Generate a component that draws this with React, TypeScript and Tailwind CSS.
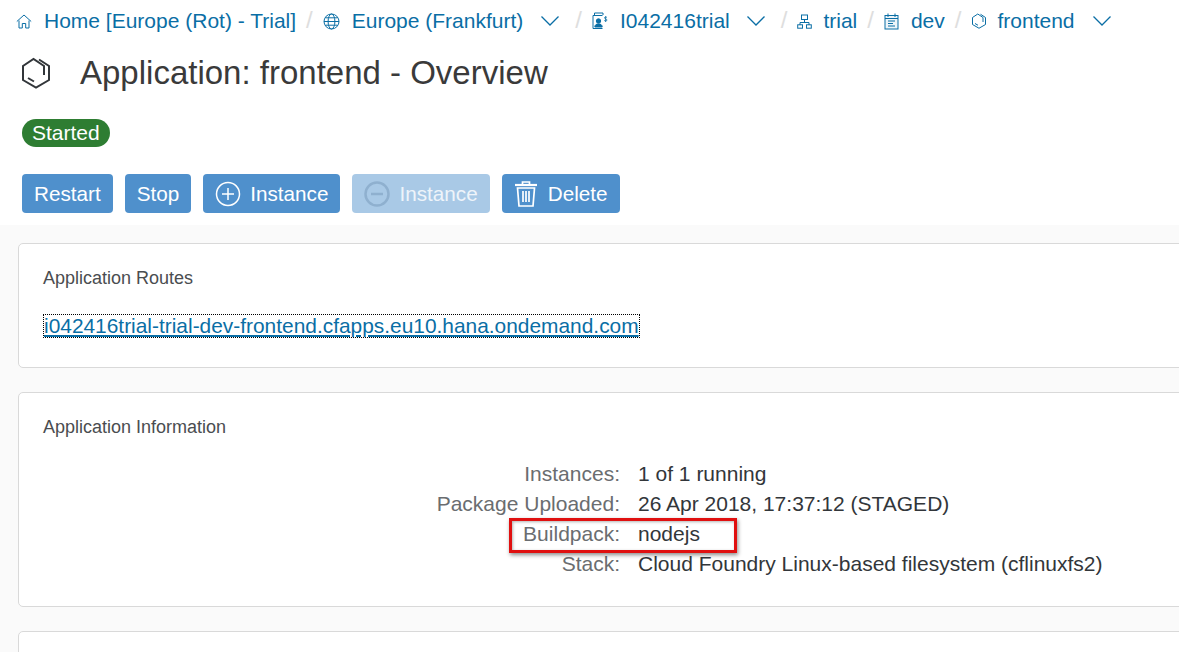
import type { ReactNode } from "react";

const font = { fontFamily: '"Liberation Sans", Arial, sans-serif' };

function Chevron() {
  return (
    <svg width="20" height="12" viewBox="0 0 20 12" fill="none" stroke="#0a6ea5" strokeWidth="1.3" className="shrink-0">
      <path d="M1.5 1.5 L10 10 L18.5 1.5" />
    </svg>
  );
}

function Slash() {
  return <span className="text-[24px] leading-none text-[#dedede]">/</span>;
}

function HexIcon({ size, color, width = 1.3 }: { size: number; color: string; width?: number }) {
  return (
    <svg width={size} height={size} viewBox="0 0 32 32" fill="none" stroke={color} strokeWidth={width} className="shrink-0">
      <path d="M19 2.5 L29 9 V23 L16 30.5 L3 23 V9 L13.5 2 L24 9 V18" />
      <path d="M8 21 L14 24.5" />
    </svg>
  );
}

function HomeIcon() {
  return (
    <svg width="16" height="15" viewBox="0 0 16 15" fill="none" stroke="#0a6ea5" strokeWidth="1">
      <path d="M0.8 7.5 L8 1 L15.2 7.5" />
      <path d="M3 6.5 V14 H6.3 V9.5 H9.7 V14 H13 V6.5" />
    </svg>
  );
}

function GlobeIcon() {
  return (
    <svg width="17" height="17" viewBox="0 0 17 17" fill="none" stroke="#0a6ea5" strokeWidth="1">
      <circle cx="8.5" cy="8.5" r="7.5" />
      <ellipse cx="8.5" cy="8.5" rx="3.4" ry="7.5" />
      <path d="M1 8.5 H16 M2.2 4.8 H14.8 M2.2 12.2 H14.8" />
    </svg>
  );
}

function AccountIcon() {
  return (
    <svg width="16" height="18" viewBox="0 0 16 18" fill="none" stroke="#0a6ea5" strokeWidth="1">
      <path d="M11 3 V1 H2.5 V3 M1 3.5 H10.5 M1 3.5 V16.5 H10.5" />
      <circle cx="6.5" cy="9" r="2.2" fill="#0a6ea5" />
      <path d="M2.8 15 C3 12.5 4.5 12 6.5 12 C8.5 12 10 12.5 10.2 15 Z" fill="#0a6ea5" />
      <path d="M15 5.5 C14 4.5 12.3 5 12.5 6 C12.7 7.2 15 6.8 15 8 C15 9.2 13 9.3 12.2 8.4 M13.6 4.2 V10" strokeWidth="0.8" />
    </svg>
  );
}

function OrgIcon() {
  return (
    <svg width="15" height="15" viewBox="0 0 15 15" fill="none" stroke="#0a6ea5" strokeWidth="1">
      <rect x="4.5" y="1" width="6" height="4.5" />
      <path d="M7.5 5.5 V8.5 M3 11 V8.5 H12 V11" />
      <rect x="0.7" y="10.8" width="4.8" height="3.4" />
      <rect x="9.5" y="10.8" width="4.8" height="3.4" />
    </svg>
  );
}

function SpaceIcon() {
  return (
    <svg width="15" height="17" viewBox="0 0 15 17" fill="none" stroke="#0a6ea5" strokeWidth="1">
      <rect x="1" y="2.5" width="13" height="13.5" fill="#eef5f9" />
      <path d="M4 0.5 V4 M11 0.5 V4 M1 5.5 H14" />
      <path d="M4 8 H11 M4 10.5 H9 M4 13 H11" />
    </svg>
  );
}

function Crumb({ icon, label, gap, chevron, chevronGap }: { icon: ReactNode; label: string; gap: string; chevron?: boolean; chevronGap?: string }) {
  return (
    <div className="flex items-center">
      <span className={`flex items-center ${gap}`}>{icon}</span>
      <span>{label}</span>
      {chevron && <span className={`flex items-center mr-[5px] ${chevronGap}`}><Chevron /></span>}
    </div>
  );
}

function ActionButton({ children, disabled }: { children: ReactNode; disabled?: boolean }) {
  return (
    <button className={`flex h-[39px] items-center rounded-[4px] px-3 text-[20.7px] ${disabled ? "bg-[#a9c9e6] text-[#eef4fa]" : "bg-[#4f90cc] text-white"}`}>
      {children}
    </button>
  );
}

function Row({ label, value }: { label: string; value: string }) {
  return (
    <div className="flex h-[30px] items-center text-[21px]">
      <div className="w-[577px] shrink-0 text-right text-[#6a6d70]">{label}</div>
      <div className="ml-[18px] text-[#32363a]">{value}</div>
    </div>
  );
}

export default function App() {
  return (
    <div style={font} className="relative h-[652px] w-[1179px] overflow-hidden bg-[#fafafa]">
      {/* HEADER */}
      <div className="h-[225px] bg-white">
        <div className="flex h-[42px] items-center pl-4 text-[21px] text-[#0a6ea5]">
          <Crumb icon={<HomeIcon />} label="Home [Europe (Rot) - Trial]" gap="mr-[12px]" />
          <span className="mx-[10px]"><Slash /></span>
          <Crumb icon={<GlobeIcon />} label="Europe (Frankfurt)" gap="mr-[12px]" chevron chevronGap="ml-[17px]" />
          <span className="mx-[10px]"><Slash /></span>
          <Crumb icon={<AccountIcon />} label="I042416trial" gap="mr-[12px]" chevron chevronGap="ml-[16px]" />
          <span className="mx-[10px]"><Slash /></span>
          <Crumb icon={<OrgIcon />} label="trial" gap="mr-[11px]" />
          <span className="mx-[10px]"><Slash /></span>
          <Crumb icon={<SpaceIcon />} label="dev" gap="mr-[12px]" />
          <span className="mx-[10px]"><Slash /></span>
          <Crumb icon={<HexIcon size={16} color="#0a6ea5" width={2} />} label="frontend" gap="mr-[10px]" chevron chevronGap="ml-[17px]" />
        </div>

        <div className="flex h-[62px] items-center pl-[20px]">
          <HexIcon size={32} color="#32363a" width={2} />
          <h1 className="ml-[28px] text-[33px] text-[#3a3a3a]">Application: frontend - Overview</h1>
        </div>

        <div className="mt-[15px] pl-[22px]">
          <span className="inline-flex h-[28px] items-center rounded-full bg-[#2e7d32] px-[10px] text-[21px] text-white">Started</span>
        </div>

        <div className="mt-[27px] flex gap-3 pl-[22px]">
          <ActionButton>Restart</ActionButton>
          <ActionButton>Stop</ActionButton>
          <ActionButton>
            <svg width="26" height="26" viewBox="0 0 26 26" fill="none" stroke="white" strokeWidth="1.5" className="mr-[9px]">
              <circle cx="13" cy="13" r="11.5" />
              <path d="M13 7 V19 M7 13 H19" />
            </svg>
            Instance
          </ActionButton>
          <ActionButton disabled>
            <svg width="26" height="26" viewBox="0 0 26 26" fill="none" stroke="#8fb0cf" strokeWidth="2.5" className="mr-[9px]">
              <circle cx="13" cy="13" r="11.5" />
              <path d="M7 13 H19" />
            </svg>
            Instance
          </ActionButton>
          <ActionButton>
            <svg width="24" height="28" viewBox="0 0 24 28" fill="none" stroke="white" strokeWidth="1.7" className="mr-[10px]">
              <path d="M1 5 H23" strokeWidth="2.2" />
              <path d="M8.5 4.5 V2 H15.5 V4.5" />
              <path d="M3.5 8 L5 26 H19 L20.5 8 Z" />
              <path d="M9 11 V22 M12 11 V22 M15 11 V22" />
            </svg>
            Delete
          </ActionButton>
        </div>
      </div>

      {/* CARDS */}
      <div className="ml-[18px] mt-[18px] flex w-[1200px] flex-col gap-[24px]">
        <section className="h-[125px] rounded-[5px] border border-[#d9d9d9] bg-white pl-[24px] pt-[24px]">
          <h2 className="text-[18px] leading-[20px] text-[#4a4d50]">Application Routes</h2>
          <div className="mt-[26px]">
            <a className="inline-block border border-dotted border-black text-[20.9px] leading-[22px] text-[#0a6ea5] underline">
              i042416trial-trial-dev-frontend.cfapps.eu10.hana.ondemand.com
            </a>
          </div>
        </section>

        <section className="h-[215px] rounded-[5px] border border-[#d9d9d9] bg-white pl-[24px] pt-[24px]">
          <h2 className="text-[18px] leading-[20px] text-[#4a4d50]">Application Information</h2>
          <div className="mt-[22px]">
            <Row label="Instances:" value="1 of 1 running" />
            <Row label="Package Uploaded:" value="26 Apr 2018, 17:37:12 (STAGED)" />
            <Row label="Buildpack:" value="nodejs" />
            <Row label="Stack:" value="Cloud Foundry Linux-based filesystem (cflinuxfs2)" />
          </div>
        </section>

        <section className="h-[60px] rounded-[5px] border border-[#d9d9d9] bg-white" />
      </div>

      {/* red highlight drawn over the screenshot */}
      <div className="absolute left-[509px] top-[518px] h-[35px] w-[228px] border-[3px] border-[#e01010] shadow-[1px_2px_4px_rgba(0,0,0,0.45),inset_1px_1px_3px_rgba(0,0,0,0.3)]" />
    </div>
  );
}
